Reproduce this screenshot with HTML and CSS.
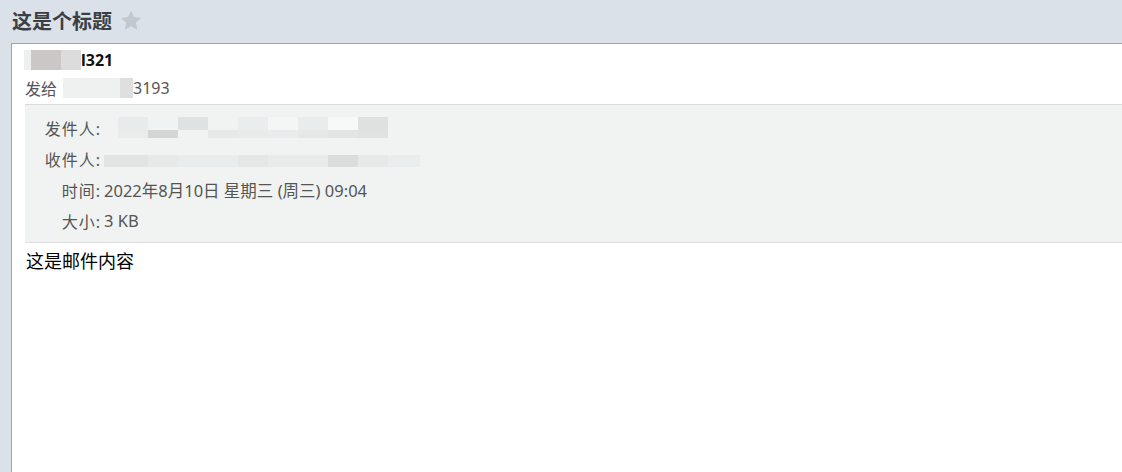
FILE: index.html
```html
<!DOCTYPE html>
<html lang="zh-CN">
<head>
    <meta charset="UTF-8">
    <meta name="viewport" content="width=device-width, initial-scale=1.0">
    <title>这是个标题</title>
    <link rel="stylesheet" href="styles.css">
</head>
<body>

    <div class="head">
        <span class="subject">这是个标题</span>
        <svg class="star" width="22" height="21" viewBox="0 0 24 23">
            <path d="M12 0.8l3.3 7 7.6 0.9-5.6 5.2 1.5 7.6L12 17.7l-6.8 3.8 1.5-7.6L1.1 8.7l7.6-0.9z" fill="#c3c7ce"/>
        </svg>
    </div>

    <div class="card">
        <div class="from-line">
            <span class="blur blur-from"></span><span class="from-tail">l321</span>
        </div>
        <div class="to-line">
            <span class="to-label">发给</span><span class="blur blur-to"></span><span class="to-tail">3193</span>
        </div>

        <div class="info">
            <div class="row">
                <span class="label">发件人:</span>
                <span class="value"><span class="blur blur-sender"></span></span>
            </div>
            <div class="row">
                <span class="label">收件人:</span>
                <span class="value"><span class="blur blur-rcpt"></span></span>
            </div>
            <div class="row">
                <span class="label">时间:</span>
                <span class="value">2022年8月10日 星期三 (周三) 09:04</span>
            </div>
            <div class="row">
                <span class="label">大小:</span>
                <span class="value">3 KB</span>
            </div>
        </div>

        <div class="content">这是邮件内容</div>
    </div>

</body>
</html>
```

FILE: styles.css
```css
* {
    box-sizing: border-box;
}

body {
    margin: 0;
    height: 472px;
    overflow: hidden;
    background-color: #dbe1e8;
    font-family: "Noto Sans", "Noto Sans CJK SC", sans-serif;
    color: #555;
    display: flex;
    flex-direction: column;
}

.head {
    height: 43px;
    display: flex;
    align-items: center;
    padding: 0 0 2px 12px;
    gap: 8px;
}

.subject {
    font-size: 20px;
    font-weight: 700;
    color: #3a3f45;
}

.star {
    margin-top: -1px;
}

.card {
    flex: 1;
    margin-left: 11px;
    background-color: #fff;
    border-top: 1px solid #9ea4aa;
    border-left: 1px solid #9ea4aa;
    padding-top: 5px;
}

.from-line {
    height: 22px;
    display: flex;
    align-items: center;
    padding-left: 12px;
    font-size: 16px;
    font-weight: 700;
    color: #111;
}

.to-line {
    height: 33px;
    display: flex;
    align-items: center;
    padding-left: 13px;
    font-size: 16px;
    color: #555;
}

.to-label {
    margin-right: 6px;
}

.blur {
    display: inline-block;
}

.blur-from {
    width: 57px;
    height: 20px;
    background: linear-gradient(to right, #eef0ef 0 7px, #cbc7c6 7px 37px, #dcdcdc 37px);
}

.blur-to {
    width: 70px;
    height: 20px;
    background: linear-gradient(to right, #eef1f0 0 57px, #dfdfdf 57px);
}

.info {
    margin-left: 13px;
    background-color: #f0f3f2;
    border-top: 1px solid #dcdcdc;
    border-bottom: 1px solid #dcdcdc;
    padding: 7px 0 6px;
}

.row {
    height: 31px;
    display: flex;
    align-items: center;
    font-size: 16px;
}

.label {
    width: 76px;
    text-align: right;
    letter-spacing: 1px;
    flex-shrink: 0;
}

.value {
    padding-left: 3px;
    font-size: 16.5px;
    display: flex;
    align-items: center;
}

.blur-sender {
    width: 286px;
    height: 21px;
    background:
        linear-gradient(to right, transparent 0 14px, #e9eceb 14px 44px, #d3d6d5 44px 74px, #f1f3f2 74px 104px, #e6e9e8 104px 134px, #e8ebea 134px 164px, #e9ecec 164px 194px, #e6e8e8 194px 224px, #e3e5e5 224px 254px, #e0e2e1 254px 284px, transparent 284px) 0 13px / 100% 8px no-repeat,
        linear-gradient(to right, transparent 0 14px, #e8ebeb 14px 44px, #f0f3f3 44px 74px, #dfe2e2 74px 104px, #f1f3f3 104px 134px, #eaeded 134px 164px, #f4f6f5 164px 194px, #e9ecec 194px 224px, #f7f9f8 224px 254px, #dfe1e0 254px 284px, transparent 284px) 0 0 / 100% 13px no-repeat;
}

.blur-rcpt {
    width: 320px;
    height: 12px;
    margin-top: 4px;
    background: linear-gradient(to right, #e1e4e3 0 44px, #e6e9e8 44px 74px, #e9ecec 74px 134px, #e4e7e6 134px 164px, #e8ebea 164px 224px, #dadddc 224px 254px, #e6e9e8 254px 284px, #eaeded 284px 316px, transparent 316px);
}

.content {
    padding: 4px 0 0 14px;
    font-size: 18px;
    color: #000;
    font-family: "Noto Sans CJK SC", sans-serif;
}
```
